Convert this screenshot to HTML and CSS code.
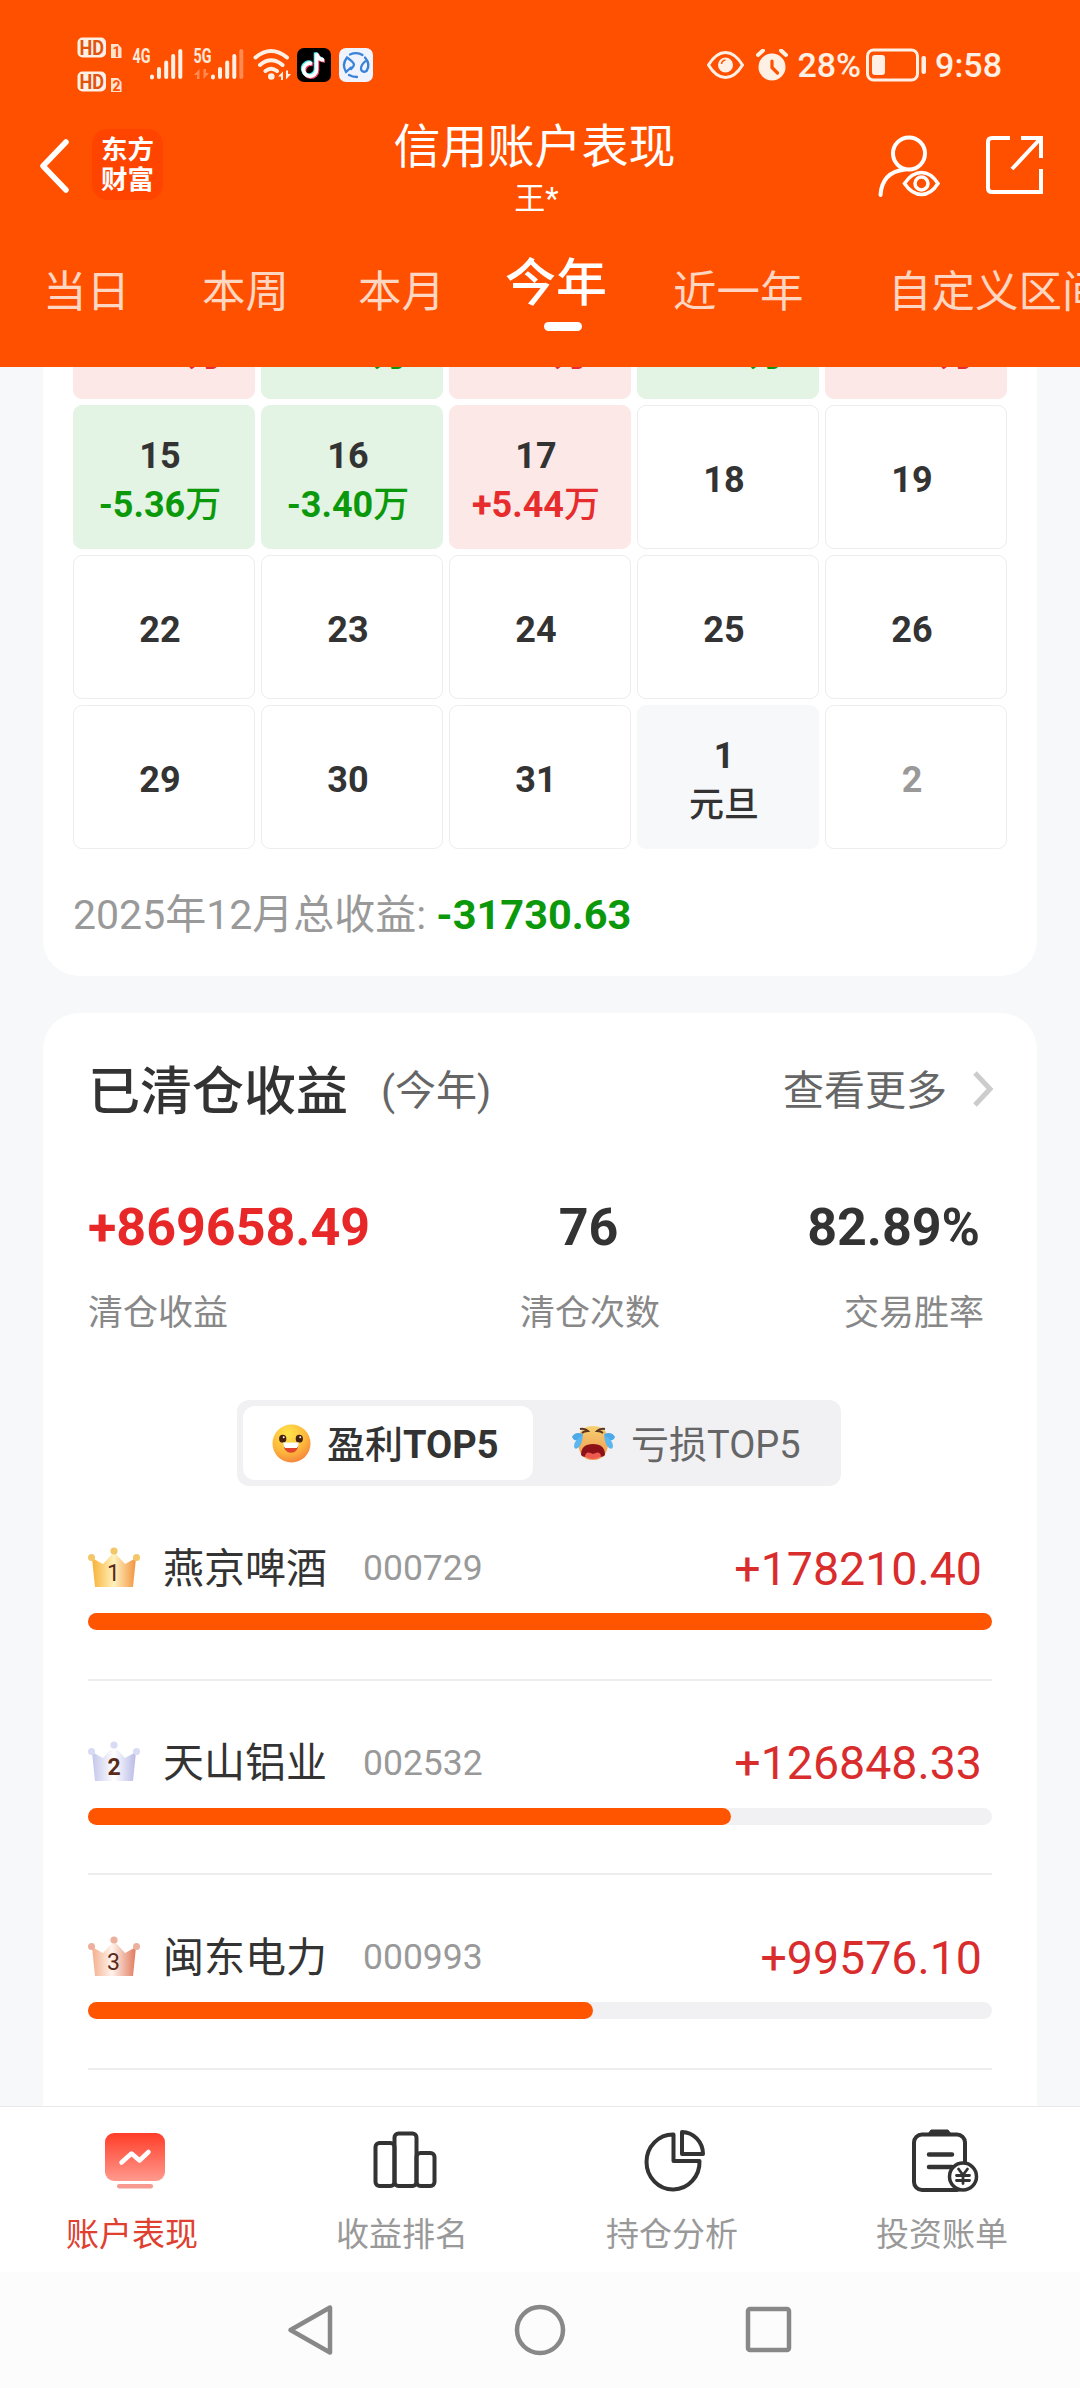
FILE: index.html
```
<!DOCTYPE html>
<html lang="zh-CN">
<head>
    <meta charset="utf-8">
    <meta name="viewport" content="width=device-width, initial-scale=1">
    <title>信用账户表现</title>
    <link rel="stylesheet" href="styles.css">
</head>
<body>
    <header class="header">
        <div class="status-bar">
            <svg class="status-left" viewBox="77 34 300 60">
                <!-- HD badges -->
                <rect x="77.5" y="37.5" width="28.5" height="20" rx="5" fill="#fff0e6"/>
                <text class="st-hd" x="79.5" y="54.5" textLength="24.5" lengthAdjust="spacingAndGlyphs">HD</text>
                <path d="M111 44h7l3.5 4v10H111z" fill="#ffe3d0"/>
                <text class="st-sim" x="112.5" y="56.5">1</text>
                <rect x="77.5" y="71.5" width="28.5" height="20" rx="5" fill="#fff0e6"/>
                <text class="st-hd" x="79.5" y="88.5" textLength="24.5" lengthAdjust="spacingAndGlyphs">HD</text>
                <path d="M111 78h7l3.5 4v10H111z" fill="#ffe3d0"/>
                <text class="st-sim" x="112.5" y="90.5">2</text>
                <!-- signals -->
                <text class="st-net" x="132.5" y="62.5" textLength="18" lengthAdjust="spacingAndGlyphs">4G</text>
                <path d="M152 76.5v1M159 69v8M166.2 62.5v14.5M173.2 56v21M180.3 51v26" stroke="#fff0e6" stroke-width="4" stroke-linecap="round"/>
                <text class="st-net" x="193.5" y="62.5" textLength="18" lengthAdjust="spacingAndGlyphs">5G</text>
                <path d="M194 75l5.5-6v10h-2.5v-4zM209 73l-5.5 6V69h2.5v4z" fill="#ff8a52"/>
                <path d="M213 76.5v1M220 69v8M227.2 62.5v14.5M234.3 56v21" stroke="#fff0e6" stroke-width="4" stroke-linecap="round"/>
                <path d="M241.3 51v26" stroke="#ff8a52" stroke-width="4" stroke-linecap="round"/>
                <!-- wifi -->
                <g fill="none" stroke="#fff0e6" stroke-width="4" stroke-linecap="round">
                    <path d="M255.5 57.5q15.5-13 31.5 0M260 65q11-9.5 22.5 0M265.5 71q5.5-4.5 11.5 0"/>
                </g>
                <circle cx="271.3" cy="76.5" r="3.3" fill="#fff0e6"/>
                <path d="M278 76.5l5-5v8.5h-2v-3.5zM291 74l-5 5.5V70.5h2v3.5z" fill="#fff0e6"/>
                <!-- note app -->
                <rect x="297" y="48" width="34" height="34" rx="7" fill="#000"/>
                <g fill="none" stroke-width="3.6">
                    <path d="M312 63.5a6.5 6.5 0 1 0 4.5 6V53.5c1 4 4 6.5 7.5 6.5" stroke="#f0446a" transform="translate(1 1)"/>
                    <path d="M312 63.5a6.5 6.5 0 1 0 4.5 6V53.5c1 4 4 6.5 7.5 6.5" stroke="#4de8ee" transform="translate(-1 -1)"/>
                    <path d="M312 63.5a6.5 6.5 0 1 0 4.5 6V53.5c1 4 4 6.5 7.5 6.5" stroke="#fff"/>
                </g>
                <!-- blue round app -->
                <rect x="339" y="48" width="34" height="34" rx="7" fill="#eef3fd"/>
                <g fill="none" stroke="#3a82d8" stroke-width="2.3" stroke-linecap="round">
                    <path d="M350 54.5q7-3 12.5.5"/>
                    <path d="M351 69q3-2.5 3-4.5t-7-7q-5.5 7-1 14.5l5-4.5"/>
                    <path d="M365 57.5q6 7 1.5 13.5-4 2-5.5-1.5-.5-4 4-8"/>
                    <path d="M349 75q3.5 2 8 2"/>
                </g>
            </svg>
            <div class="status-right">
                <svg class="st-eye" viewBox="0 0 37 30">
                    <path d="M1.5 15Q9 2.5 18.5 2.5T35.5 15Q28 27.5 18.5 27.5T1.5 15z" fill="none" stroke="#fff0e6" stroke-width="3"/>
                    <circle cx="18.5" cy="15" r="7.5" fill="#fff0e6"/>
                    <path d="M14.5 14q.5-3.5 4-4" fill="none" stroke="#ff5000" stroke-width="1.5"/>
                </svg>
                <svg class="st-alarm" viewBox="0 0 32 32">
                    <circle cx="16" cy="18" r="13.5" fill="#fff0e6"/>
                    <path d="M2 6l5-4.5M30 6l-5-4.5" stroke="#fff0e6" stroke-width="4" stroke-linecap="round"/>
                    <path d="M16 12v6.5l5.5 5.5" fill="none" stroke="#ff5000" stroke-width="3.2" stroke-linecap="round"/>
                </svg>
                <span class="st-pct">28%</span>
                <svg class="st-battery" viewBox="0 0 62 34">
                    <rect x="1.5" y="2" width="50" height="30" rx="6" fill="none" stroke="#fff0e6" stroke-width="3"/>
                    <rect x="6" y="7" width="13" height="20" rx="3" fill="#fff0e6"/>
                    <rect x="55.5" y="8" width="4.5" height="18" rx="2" fill="#fff0e6"/>
                </svg>
                <span class="st-time">9:58</span>
            </div>
        </div>

        <div class="nav-bar">
            <div class="nav-left">
                <svg class="back" viewBox="0 0 30 56">
                    <path d="M27 4L4 28l23 24" fill="none" stroke="#fff" stroke-width="5.5" stroke-linecap="round" stroke-linejoin="round"/>
                </svg>
                <div class="logo">东方<br>财富</div>
            </div>
            <div class="nav-title">
                <h1>信用账户表现</h1>
                <p>王*</p>
            </div>
            <div class="nav-right">
                <svg class="ic-person" viewBox="0 0 62 62" fill="none" stroke="#fff" stroke-width="4" stroke-linecap="round">
                    <circle cx="31" cy="18.5" r="16"/>
                    <path d="M2.5 60Q4 37 27 34.5"/>
                    <path d="M26.5 48.5Q34 37.5 43.5 37.5T60 48.5Q53 59.5 43.5 59.5T26.5 48.5z" stroke-width="3.5"/>
                    <circle cx="43.5" cy="48.5" r="6.5" stroke-width="3.5"/>
                </svg>
                <svg class="ic-share" viewBox="0 0 58 60" fill="none" stroke="#fff" stroke-width="4">
                    <path d="M24 3H6q-4 0-4 4v46q0 4 4 4h49V34M35 3h20v20M55 3L26 34"/>
                </svg>
            </div>
        </div>

        <nav class="tabs">
            <span class="tab t1">当日</span>
            <span class="tab t2">本周</span>
            <span class="tab t3">本月</span>
            <span class="tab t4 active">今年</span>
            <span class="tab t5">近一年</span>
            <span class="tab t6">自定义区间</span>
        </nav>
    </header>

    <main class="content">
        <section class="card calendar-card">
            <div class="calendar">
                <!-- week scrolled under the header -->
                <div class="day up past"><span>+2.35<i>万</i></span></div>
                <div class="day down past"><span>-1.86<i>万</i></span></div>
                <div class="day up past"><span>+1.4<i>万</i></span></div>
                <div class="day down past"><span>-4.07<i>万</i></span></div>
                <div class="day up past"><span>+2.45<i>万</i></span></div>

                <div class="day down"><b>15</b><span>-5.36<i>万</i></span></div>
                <div class="day down"><b>16</b><span>-3.40<i>万</i></span></div>
                <div class="day up"><b>17</b><span>+5.44<i>万</i></span></div>
                <div class="day"><b>18</b></div>
                <div class="day"><b>19</b></div>

                <div class="day"><b>22</b></div>
                <div class="day"><b>23</b></div>
                <div class="day"><b>24</b></div>
                <div class="day"><b>25</b></div>
                <div class="day"><b>26</b></div>

                <div class="day"><b>29</b></div>
                <div class="day"><b>30</b></div>
                <div class="day"><b>31</b></div>
                <div class="day holiday"><b>1</b><span>元旦</span></div>
                <div class="day other"><b>2</b></div>
            </div>
            <p class="total">2025年12月总收益: <b>-31730.63</b></p>
        </section>

        <section class="card closed-card">
            <div class="card-head">
                <h2>已清仓收益</h2>
                <span class="range">(今年)</span>
                <span class="more">查看更多</span>
                <svg class="chevron" viewBox="0 0 22 38">
                    <path d="M3 3l15 16L3 35" fill="none" stroke="#ccc" stroke-width="5"/>
                </svg>
            </div>

            <div class="stats">
                <div class="stat">
                    <strong class="red">+869658.49</strong>
                    <span>清仓收益</span>
                </div>
                <div class="stat mid">
                    <strong>76</strong>
                    <span>清仓次数</span>
                </div>
                <div class="stat last">
                    <strong>82.89%</strong>
                    <span>交易胜率</span>
                </div>
            </div>

            <div class="switch">
                <div class="switch-item on">
                    <svg class="emoji smile" viewBox="0 0 40 40">
                        <defs>
                            <radialGradient id="face" cx=".4" cy=".25" r=".8">
                                <stop offset="0" stop-color="#ffe64a"/>
                                <stop offset=".6" stop-color="#fdb83c"/>
                                <stop offset="1" stop-color="#f5803c"/>
                            </radialGradient>
                        </defs>
                        <circle cx="20" cy="20" r="19.5" fill="url(#face)"/>
                        <ellipse cx="11" cy="15" rx="3.7" ry="4" fill="#43200f"/>
                        <ellipse cx="28" cy="15" rx="3.7" ry="4" fill="#43200f"/>
                        <circle cx="12" cy="13.5" r="1" fill="#fff"/>
                        <circle cx="29" cy="13.5" r="1" fill="#fff"/>
                        <path d="M12 20h15q0 9.5-7.5 9.5T12 20z" fill="#e0442e"/>
                        <path d="M11.5 19h16q0 4-2 5.5h-12q-2-1.5-2-5.5z" fill="#fff"/>
                    </svg>
                    <span>盈利<b>TOP5</b></span>
                </div>
                <div class="switch-item">
                    <svg class="emoji cry" viewBox="0 0 45 36">
                        <defs>
                            <linearGradient id="face2" x1="0" y1="0" x2="0" y2="1">
                                <stop offset="0" stop-color="#f6d070"/>
                                <stop offset="1" stop-color="#f0974f"/>
                            </linearGradient>
                        </defs>
                        <path d="M22 1q14 0 15.5 14Q37 35 22 35T7 15Q8 1 22 1z" fill="url(#face2)"/>
                        <path d="M9 4q5-1 8 2-4 0-6 2M34 4q-5-1-8 2 4 0 6 2" fill="none" stroke="#5a3420" stroke-width="1.8"/>
                        <path d="M12 9Q4 6 1 12q2 5 8 3M33 9q8-3 11 3-2 5-8 3" fill="#4da9e8"/>
                        <path d="M12 10Q3 15 3 21q0 4 4 2 4-3 5-13zM33 10q9 5 9 11 0 4-4 2-4-3-5-13z" fill="#5bb5ef"/>
                        <path d="M10 30q0-11 12-11t12 11q-2 3-6 1-6-4-12 0-4 2-6-1z" fill="#8c1218"/>
                        <path d="M14 31q1-6 8-2 7-4 8 2-3 3-8 3t-8-3z" fill="#ee5a50"/>
                    </svg>
                    <span>亏损TOP5</span>
                </div>
            </div>

            <ul class="rank">
                <li>
                    <div class="rank-row">
                        <svg class="crown" viewBox="0 0 52 41">
                            <defs>
                                <linearGradient id="gold">
                                    <stop offset="0" stop-color="#f8b136"/>
                                    <stop offset=".5" stop-color="#fff2bd"/>
                                    <stop offset="1" stop-color="#f29340"/>
                                </linearGradient>
                            </defs>
                            <path d="M4 11l11 6L26 5l11 12 11-6-3 29H7z" fill="url(#gold)"/>
                            <g fill="#f3c668"><circle cx="3.5" cy="10.5" r="3.5"/><circle cx="26" cy="4" r="3.6"/><circle cx="48.5" cy="10.5" r="3.5"/></g>
                            <text class="crown-num" x="25.5" y="34">1</text>
                        </svg>
                        <span class="name">燕京啤酒</span>
                        <span class="code">000729</span>
                        <span class="value">+178210.40</span>
                    </div>
                    <div class="bar"><div class="fill" style="width: 100%"></div></div>
                </li>
                <li>
                    <div class="rank-row">
                        <svg class="crown" viewBox="0 0 52 41">
                            <defs>
                                <linearGradient id="silver">
                                    <stop offset="0" stop-color="#c3c5ea"/>
                                    <stop offset=".5" stop-color="#fff"/>
                                    <stop offset="1" stop-color="#b8bae6"/>
                                </linearGradient>
                            </defs>
                            <path d="M4 11l11 6L26 5l11 12 11-6-3 29H7z" fill="url(#silver)"/>
                            <g fill="#d9daf3"><circle cx="3.5" cy="10.5" r="3.5"/><circle cx="26" cy="4" r="3.6"/><circle cx="48.5" cy="10.5" r="3.5"/></g>
                            <text class="crown-num bold" x="26" y="34">2</text>
                        </svg>
                        <span class="name">天山铝业</span>
                        <span class="code">002532</span>
                        <span class="value">+126848.33</span>
                    </div>
                    <div class="bar"><div class="fill" style="width: 71.18%"></div></div>
                </li>
                <li>
                    <div class="rank-row">
                        <svg class="crown" viewBox="0 0 52 41">
                            <defs>
                                <linearGradient id="bronze">
                                    <stop offset="0" stop-color="#f4ae8c"/>
                                    <stop offset=".45" stop-color="#fff3ec"/>
                                    <stop offset="1" stop-color="#e07a5c"/>
                                </linearGradient>
                            </defs>
                            <path d="M4 11l11 6L26 5l11 12 11-6-3 29H7z" fill="url(#bronze)"/>
                            <g fill="#edb09c"><circle cx="3.5" cy="10.5" r="3.5"/><circle cx="26" cy="4" r="3.6"/><circle cx="48.5" cy="10.5" r="3.5"/></g>
                            <text class="crown-num" x="25.5" y="34">3</text>
                        </svg>
                        <span class="name">闽东电力</span>
                        <span class="code">000993</span>
                        <span class="value">+99576.10</span>
                    </div>
                    <div class="bar"><div class="fill" style="width: 55.88%"></div></div>
                </li>
            </ul>
        </section>
    </main>

    <footer class="tabbar">
        <div class="tabbar-item active">
            <svg viewBox="0 0 70 64">
                <defs>
                    <linearGradient id="screen" x1="0" y1="0" x2="0" y2="1">
                        <stop offset="0" stop-color="#ff3d28"/>
                        <stop offset="1" stop-color="#ff9a8e"/>
                    </linearGradient>
                </defs>
                <rect x="5" y="4" width="60" height="48" rx="9" fill="url(#screen)"/>
                <rect x="17" y="55" width="36" height="4.5" rx="2.2" fill="#f79a8f"/>
                <path d="M21.5 33.5l10-9 8 7 9-8.5" fill="none" stroke="#fff" stroke-width="4.5" stroke-linecap="round" stroke-linejoin="round"/>
            </svg>
            <span>账户表现</span>
        </div>
        <div class="tabbar-item">
            <svg viewBox="0 0 70 64" fill="none" stroke="#333" stroke-width="4">
                <rect x="5.5" y="14" width="19" height="43" rx="4"/>
                <rect x="24.5" y="4.5" width="22" height="52.5" rx="4"/>
                <rect x="46.5" y="24" width="18" height="33" rx="4"/>
            </svg>
            <span>收益排名</span>
        </div>
        <div class="tabbar-item">
            <svg viewBox="0 0 70 64" fill="none" stroke="#333" stroke-width="4" stroke-linejoin="round">
                <path d="M33.5 5.5A26.5 27.5 0 1 0 59.5 32H33.5z"/>
                <path d="M42 3v22h21A21.5 22 0 0 0 42 3z"/>
            </svg>
            <span>持仓分析</span>
        </div>
        <div class="tabbar-item">
            <svg viewBox="0 0 70 64" fill="none" stroke="#333" stroke-width="4">
                <rect x="4" y="5.5" width="51" height="55.5" rx="8"/>
                <path d="M18 5l3-4h17l3 4z" fill="#333" stroke-width="1"/>
                <path d="M19 25.5h23M19 38h23" stroke-linecap="round" stroke-width="4.5"/>
                <circle cx="53" cy="47.5" r="13.5" fill="#fff" stroke-width="3.5"/>
                <path d="M48.5 40l4.5 6 4.5-6M53 46v8.5M46.5 46.5h13M46.5 51.5h13" stroke-width="2.8" stroke-linecap="round"/>
            </svg>
            <span>投资账单</span>
        </div>
    </footer>

    <div class="sys-nav">
        <svg viewBox="0 0 52 52"><path d="M45 3.5v45L5.5 26z"/></svg>
        <svg viewBox="0 0 52 52"><circle cx="26" cy="26" r="23"/></svg>
        <svg viewBox="0 0 52 52"><rect x="5" y="5" width="41" height="41" rx="2"/></svg>
    </div>
</body>
</html>
```

FILE: styles.css
```
* {
    box-sizing: border-box;
    margin: 0;
    padding: 0;
}

body {
    width: 1080px;
    height: 2388px;
    display: flex;
    flex-direction: column;
    overflow: hidden;
    background-color: #f7f8fa;
    color: #333;
    font-family: Roboto, "Noto Sans CJK SC", sans-serif;
}

svg {
    display: block;
    flex: none;
}

span, p, h1, h2, strong {
    white-space: nowrap;
}

/* header */
.header {
    height: 367px;
    flex: none;
    background-color: #ff5000;
    color: #fff;
    overflow: hidden;
}

.status-bar {
    display: flex;
    justify-content: space-between;
    align-items: flex-start;
    height: 112px;
    padding: 34px 78px 0 77px;
}

.status-left {
    width: 300px;
    height: 60px;
}

.st-hd {
    font-size: 20px;
    font-weight: 700;
    fill: #e0540f;
}

.st-sim {
    font-size: 14px;
    font-weight: 700;
    fill: #ff5000;
}

.st-net {
    font-size: 20px;
    font-weight: 700;
    fill: #ffe8da;
}

.status-right {
    display: flex;
    align-items: center;
    height: 62px;
    color: #fff0e6;
    font-size: 34px;
    font-weight: 500;
    line-height: 40px;
}

.st-eye {
    width: 37px;
    height: 30px;
}

.st-alarm {
    width: 32px;
    height: 32px;
    margin: 0 9px 0 12px;
}

.st-battery {
    width: 62px;
    height: 34px;
    margin: 0 7px 0 5px;
}

.nav-bar {
    display: grid;
    grid-template-columns: 300px 1fr 300px;
    height: 118px;
}

.nav-left {
    display: flex;
    align-items: flex-start;
    padding-left: 39px;
}

.back {
    width: 30px;
    height: 56px;
    margin-top: 26px;
}

.logo {
    width: 71px;
    height: 71px;
    margin: 17px 0 0 23px;
    padding-top: 6px;
    border-radius: 15px;
    background-color: #ff4400;
    font-size: 26.5px;
    font-weight: 700;
    line-height: 30px;
    text-align: center;
}

.nav-title {
    text-align: center;
    padding: 5px 11px 0 0;
}

.nav-title h1 {
    font-size: 47px;
    font-weight: 400;
    line-height: 60px;
}

.nav-title p {
    padding-left: 4px;
    font-size: 31px;
    line-height: 44px;
}

.nav-right {
    display: flex;
    justify-content: flex-end;
    padding: 23px 36px 0 0;
}

.ic-person {
    width: 62px;
    height: 62px;
    margin-right: 46px;
}

.ic-share {
    width: 58px;
    height: 60px;
}

.tabs {
    display: flex;
    height: 137px;
    padding-left: 43px;
}

.tab {
    flex: none;
    padding-top: 33px;
    font-size: 43.5px;
    line-height: 60px;
    color: #ffd6c2;
}

.t1 { width: 159px; }
.t2 { width: 156px; }
.t3 { width: 147px; }
.t4 { width: 168px; }
.t5 { width: 215px; }

.tab.active {
    padding-top: 24px;
    font-size: 51px;
    font-weight: 500;
    color: #fff;
}

.tab.active::after {
    content: "";
    display: block;
    width: 38px;
    height: 9px;
    margin: 8px 0 0 39px;
    border-radius: 5px;
    background-color: #fff;
}

/* content */
.content {
    flex: none;
    height: 1739px;
    padding: 0 43px;
    overflow: hidden;
}

.card {
    background-color: #fff;
    border-radius: 36px;
}

.calendar-card {
    height: 721px;
    margin-top: -112px;
    padding: 0 30px;
}

.calendar {
    display: grid;
    grid-template-columns: repeat(5, 182px);
    grid-auto-rows: 144px;
    gap: 6px;
}

.day {
    display: flex;
    flex-direction: column;
    align-items: center;
    justify-content: center;
    padding: 7px 8px 0 0;
    border: 1px solid #ededed;
    border-radius: 9px;
    font-size: 36px;
    line-height: 49px;
}

.day.past {
    padding-top: 54px;
}

.day span {
    font-size: 36px;
    font-weight: 700;
}

.day i {
    font-style: normal;
    font-weight: 500;
}

.day.up {
    border-color: #fce8e7;
    background-color: #fce8e7;
}

.day.up span {
    color: #e62c2c;
}

.day.down {
    border-color: #e3f4e4;
    background-color: #e3f4e4;
}

.day.down span {
    color: #0b990b;
}

.day.holiday {
    border-color: #f7f8fa;
    background-color: #f7f8fa;
}

.day.holiday span {
    font-size: 35px;
    font-weight: 500;
}

.day.other {
    color: #999;
}

.total {
    margin-top: 36px;
    font-size: 41px;
    line-height: 60px;
    color: #999;
}

.total b {
    font-size: 41.5px;
    color: #0b990b;
}

.closed-card {
    height: 1200px;
    margin-top: 37px;
    padding: 50px 45px 0 45px;
}

.card-head {
    display: flex;
    align-items: flex-start;
    height: 60px;
}

.card-head h2 {
    font-size: 52px;
    font-weight: 500;
    line-height: 60px;
}

.range {
    margin-left: 33px;
    font-size: 41px;
    line-height: 56px;
    color: #666;
}

.more {
    margin-left: auto;
    font-size: 41px;
    line-height: 56px;
    color: #666;
}

.chevron {
    width: 22px;
    height: 38px;
    margin: 7px -2px 0 25px;
}

.stats {
    display: grid;
    grid-template-columns: 1fr auto 1fr;
    margin-top: 75px;
}

.stat {
    display: flex;
    flex-direction: column;
}

.stat strong {
    font-size: 52px;
    line-height: 60px;
}

.stat span {
    margin-top: 31px;
    font-size: 35px;
    line-height: 50px;
    color: #888;
}

.stat.mid {
    align-items: center;
    padding-left: 100px;
}

.stat.mid strong {
    margin-right: 3px;
}

.stat.last {
    align-items: flex-end;
    padding-right: 8px;
}

.stat.last strong {
    margin-right: 4px;
}

.red {
    color: #e82828;
}

.switch {
    display: flex;
    width: 604px;
    height: 86px;
    margin: 61px 0 0 149px;
    padding: 6px;
    border-radius: 12px;
    background-color: #f1f1f4;
}

.switch-item {
    display: flex;
    align-items: center;
    width: 290px;
    padding-left: 29px;
    border-radius: 12px;
    font-size: 38px;
    line-height: 60px;
    color: #666;
}

.switch-item span {
    padding-top: 4px;
}

.switch-item + .switch-item {
    padding-left: 38px;
}

.switch-item.on {
    background-color: #fff;
    color: #333;
    font-weight: 500;
}

.smile {
    width: 39px;
    height: 39px;
    margin-right: 16px;
}

.cry {
    width: 45px;
    height: 36px;
    margin-right: 15px;
}

/* ranking */
.rank {
    list-style: none;
}

.rank li {
    height: 194.5px;
    padding-top: 52px;
    border-bottom: 2px solid #ededed;
}

.rank-row {
    display: flex;
    align-items: center;
    height: 60px;
}

.crown {
    width: 52px;
    height: 41px;
    margin-top: -2px;
}

.crown-num {
    font-size: 23px;
    text-anchor: middle;
    fill: #5a2a1a;
}

.crown-num.bold {
    font-weight: 700;
}

.name {
    margin: 1px 0 0 23px;
    font-size: 41px;
    line-height: 60px;
}

.code {
    margin-left: 36px;
    font-size: 35.5px;
    line-height: 60px;
    color: #999;
}

.value {
    margin: 1px 10px 0 auto;
    font-size: 46.5px;
    line-height: 60px;
    color: #d92d2d;
}

.bar {
    height: 17px;
    margin-top: 15px;
    border-radius: 9px;
    background-color: #f1f1f4;
}

.fill {
    height: 17px;
    border-radius: 9px;
    background-color: #ff5500;
}

/* bottom bars */
.tabbar {
    display: flex;
    flex: none;
    height: 166px;
    border-top: 1px solid #e8e8e8;
    background-color: #fff;
}

.tabbar-item {
    display: flex;
    flex-direction: column;
    align-items: center;
    width: 270px;
    padding-top: 22px;
}

.tabbar-item svg {
    width: 70px;
    height: 64px;
}

.tabbar-item span {
    margin: 17px 6px 0 0;
    font-size: 33px;
    line-height: 50px;
    color: #999;
}

.tabbar-item.active span {
    color: #e04030;
}

.sys-nav {
    display: flex;
    justify-content: center;
    align-items: center;
    gap: 177px;
    flex: 1;
    background-color: #fcfcfc;
}

.sys-nav svg {
    width: 52px;
    height: 52px;
    fill: none;
    stroke: #888;
    stroke-width: 4.5;
    stroke-linejoin: round;
}
```
